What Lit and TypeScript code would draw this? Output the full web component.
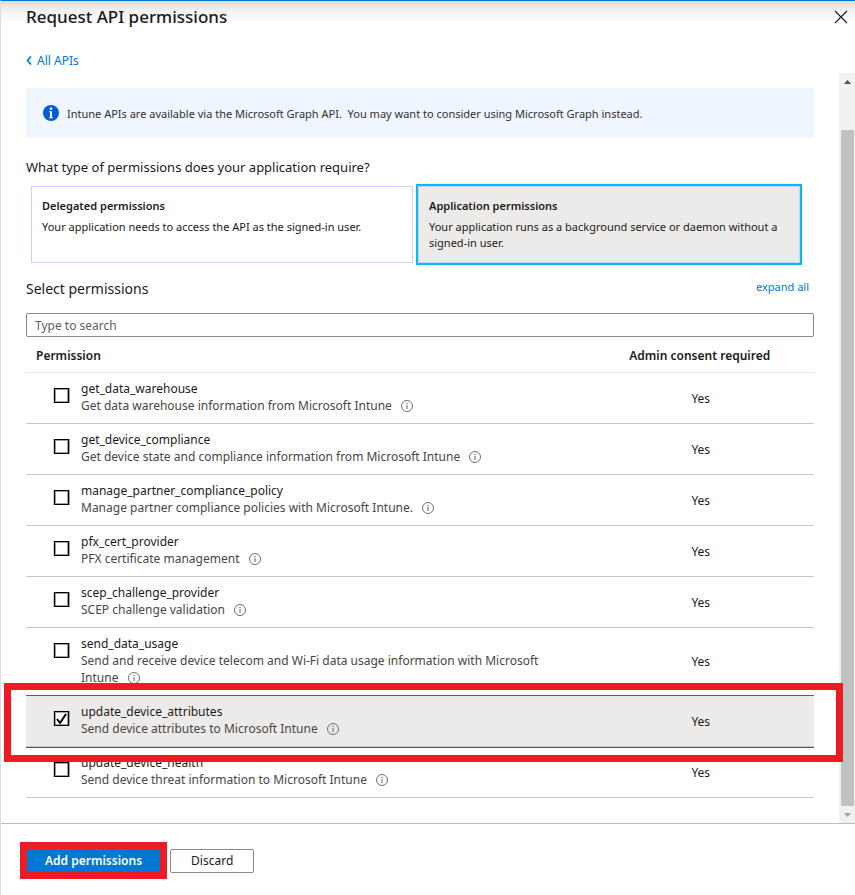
import { LitElement, html, css } from "lit";
import { customElement, state } from "lit/decorators.js";

interface Permission {
  name: string;
  description: string;
  checked?: boolean;
}

const PERMISSIONS: Permission[] = [
  { name: "get_data_warehouse", description: "Get data warehouse information from Microsoft Intune" },
  { name: "get_device_compliance", description: "Get device state and compliance information from Microsoft Intune" },
  { name: "manage_partner_compliance_policy", description: "Manage partner compliance policies with Microsoft Intune." },
  { name: "pfx_cert_provider", description: "PFX certificate management" },
  { name: "scep_challenge_provider", description: "SCEP challenge validation" },
  { name: "send_data_usage", description: "Send and receive device telecom and Wi-Fi data usage information with Microsoft Intune" },
  { name: "update_device_attributes", description: "Send device attributes to Microsoft Intune", checked: true },
  { name: "update_device_health", description: "Send device threat information to Microsoft Intune" },
];

const infoIcon = html`<svg class="info" viewBox="0 0 12 12" aria-hidden="true">
  <circle cx="6" cy="6" r="5.5" fill="none" stroke="#605e5c" stroke-width="0.9" />
  <path d="M6 5v4" stroke="#605e5c" stroke-width="1" />
  <circle cx="6" cy="3.4" r="0.7" fill="#605e5c" />
</svg>`;

@customElement("app-root")
export class AppRoot extends LitElement {
  @state() private permissions = PERMISSIONS;
  @state() private kind: "delegated" | "application" = "application";

  static styles = css`
    :host {
      display: flex;
      flex-direction: column;
      box-sizing: border-box;
      min-height: 100vh;
      border-top: 1px solid #0078d4;
      border-left: 1px solid #dedede;
      background: #fff linear-gradient(#dcdcdc, #f3f3f3 10px, #fff 24px) no-repeat top / 100% 24px;
      color: #1b1a19;
      font: 12px/17px "Noto Sans", "Open Sans", sans-serif;
    }
    * { box-sizing: border-box; }
    button, input { font: inherit; color: inherit; margin: 0; }
    a { color: #0078d4; text-decoration: none; }
    .header {
      display: flex;
      justify-content: space-between;
      align-items: center;
      height: 32px;
      padding: 0 7px 0 25px;
    }
    .title { margin: 0; font-size: 17px; line-height: 24px; font-weight: 500; }
    .close { width: 14px; height: 14px; padding: 0; border: 0; background: none; }
    .close svg { display: block; width: 14px; height: 14px; }
    .nav { padding: 19px 25px 0; height: 40px; }
    .back { display: inline-flex; align-items: center; gap: 5px; }
    .back svg { width: 6px; height: 9px; }
    .body { display: flex; flex: 1; }
    .content { flex: 1; min-width: 0; padding: 15px 25px 25px; }
    .notice {
      display: flex;
      align-items: center;
      gap: 8px;
      min-height: 50px;
      padding: 0 17px;
      border-radius: 2px;
      background: #eff6ff;
      color: #323130;
      font-size: 11px;
    }
    .notice svg { width: 16px; height: 16px; flex: none; }
    .question { margin: 19px 0 9px; font-size: 13px; line-height: 20px; font-weight: 400; }
    .cards { display: grid; grid-template-columns: 1fr 1fr; gap: 5px; padding: 0 14px 0 5px; }
    .card {
      display: flex;
      flex-direction: column;
      gap: 5px;
      min-height: 77px;
      padding: 11px 10px;
      border: 1px solid #c7d4f9;
      background: #fff;
      font-size: 11px;
      line-height: 16px;
      text-align: left;
    }
    .card.selected { background: #edebe9; outline: 2px solid #00bcf2; }
    .card-title { font-weight: 600; }
    .section {
      display: flex;
      justify-content: space-between;
      align-items: flex-start;
      padding: 16px 5px 0 0;
      height: 50px;
    }
    .section-title { margin: 0; font-size: 14px; line-height: 20px; font-weight: 400; }
    .expand { font-size: 11px; line-height: 16px; }
    .search {
      display: block;
      width: 100%;
      height: 24px;
      padding: 0 8px;
      border: 1px solid #8a8886;
      border-radius: 2px;
      background: #fff;
    }
    .search::placeholder { color: #605e5c; opacity: 1; }
    table { width: 100%; table-layout: fixed; border-collapse: separate; border-spacing: 0; }
    th { height: 36px; padding: 1px 0 0; font-weight: 600; border-bottom: 1px solid #edebe9; }
    td { padding: 0; border-bottom: 1px solid #c8c6c4; }
    .col-name { width: 71%; text-align: left; }
    th.col-name { padding-left: 10px; }
    .consent { padding-left: 2px; text-align: center; }
    .row { position: relative; }
    .row.selected td { background: #edebe9; box-shadow: 0 -1px #605e5c, 0 1px #605e5c; }
    .permission { display: flex; align-items: flex-start; gap: 12px; padding: 7px 30px 9px 28px; }
    .box {
      appearance: none;
      flex: none;
      width: 15px;
      height: 15px;
      margin-top: 8px;
      border: 1px solid #000;
      box-shadow: inset 0 0 0 1px #a0a0a0, 1px 0 #a0a0a0, -1px 0 #d0d0d0;
      background: #fff;
    }
    .box:checked {
      background: #fff url("data:image/svg+xml,%3Csvg xmlns='http://www.w3.org/2000/svg' viewBox='0 0 13 13'%3E%3Cpath d='M2 7l3 4L11 2' fill='none' stroke='%23000' stroke-width='2'/%3E%3C/svg%3E") center / 13px 13px;
    }
    .description { display: block; color: #484644; }
    .info { width: 12px; height: 12px; margin-left: 6px; vertical-align: -2px; }
    .callout { position: absolute; border: 7px solid #ed1c24; pointer-events: none; z-index: 2; }
    .row .callout { inset: -13px -29px -15px -22px; }
    .scrollbar {
      display: flex;
      flex-direction: column;
      align-items: center;
      width: 16px;
      background: #f1f1f1;
    }
    .arrow { width: 7px; height: 4px; margin: 7px 0 6px; }
    .thumb { flex: 1; width: 13px; margin-top: 40px; background: #c1c1c1; }
    .footer {
      display: flex;
      align-items: flex-start;
      gap: 10px;
      height: 72px;
      padding: 25px 26px 0;
      border-top: 1px solid #bebbb8;
    }
    .primary-wrap { position: relative; display: flex; }
    .primary-wrap .callout { inset: -7px; }
    .button { height: 24px; padding: 0 20px; border: 1px solid #8a8886; border-radius: 2px; background: #fff; line-height: 16px; }
    .button.primary { height: 23px; padding: 0 18px; border: 0; border-radius: 0; background: #0078d4; color: #fff; font-weight: 600; }
  `;

  private toggle(index: number) {
    this.permissions = this.permissions.map((p, i) => (i === index ? { ...p, checked: !p.checked } : p));
  }

  private renderRow(p: Permission, index: number) {
    return html`<tr class="row ${p.checked ? "selected" : ""}">
      <td>
        <label class="permission">
          <input class="box" type="checkbox" .checked=${!!p.checked} @change=${() => this.toggle(index)} />
          <span>${p.name}<span class="description">${p.description} ${infoIcon}</span></span>
        </label>
        ${p.name === "update_device_attributes" ? html`<div class="callout"></div>` : ""}
      </td>
      <td class="consent">Yes</td>
    </tr>`;
  }

  render() {
    return html`
      <header class="header">
        <h1 class="title">Request API permissions</h1>
        <button class="close" aria-label="Close">
          <svg viewBox="0 0 14 14"><path d="M1 1l12 12M13 1L1 13" stroke="#201f1e" stroke-width="1.2" /></svg>
        </button>
      </header>
      <nav class="nav">
        <a class="back" href="#">
          <svg viewBox="0 0 6 9"><path d="M5 .5L1.500 4.500 5 8.500" fill="none" stroke="#0078d4" stroke-width="1.600" /></svg>All APIs
        </a>
      </nav>
      <div class="body">
        <main class="content">
          <div class="notice">
            <svg viewBox="0 0 16 16" aria-hidden="true">
              <circle cx="8" cy="8" r="8" fill="#015cda" />
              <circle cx="8" cy="3.700" r="1.300" fill="#fff" />
              <path d="M6 6.300h3v6h1v1H6v-1h1V7.300H6z" fill="#fff" />
            </svg>
            <span>Intune APIs are available via the Microsoft Graph API.&nbsp; You may want to consider using Microsoft Graph instead.</span>
          </div>
          <h2 class="question">What type of permissions does your application require?</h2>
          <div class="cards">
            <button class="card ${this.kind === "delegated" ? "selected" : ""}" @click=${() => (this.kind = "delegated")}>
              <span class="card-title">Delegated permissions</span>
              <span>Your application needs to access the API as the signed-in user.</span>
            </button>
            <button class="card ${this.kind === "application" ? "selected" : ""}" @click=${() => (this.kind = "application")}>
              <span class="card-title">Application permissions</span>
              <span>Your application runs as a background service or daemon without a signed-in user.</span>
            </button>
          </div>
          <div class="section">
            <h2 class="section-title">Select permissions</h2>
            <a class="expand" href="#">expand all</a>
          </div>
          <input class="search" type="text" placeholder="Type to search" aria-label="Search permissions" />
          <table>
            <thead>
              <tr><th class="col-name" scope="col">Permission</th><th scope="col">Admin consent required</th></tr>
            </thead>
            <tbody>${this.permissions.map((p, i) => this.renderRow(p, i))}</tbody>
          </table>
        </main>
        <div class="scrollbar" aria-hidden="true">
          <svg class="arrow" viewBox="0 0 7 4"><path d="M0 4L3.500 0 7 4z" fill="#505050" /></svg>
          <div class="thumb"></div>
          <svg class="arrow" viewBox="0 0 7 4"><path d="M0 0l3.500 4L7 0z" fill="#a3a3a3" /></svg>
        </div>
      </div>
      <footer class="footer">
        <div class="primary-wrap">
          <button class="button primary">Add permissions</button>
          <div class="callout"></div>
        </div>
        <button class="button">Discard</button>
      </footer>
    `;
  }
}
